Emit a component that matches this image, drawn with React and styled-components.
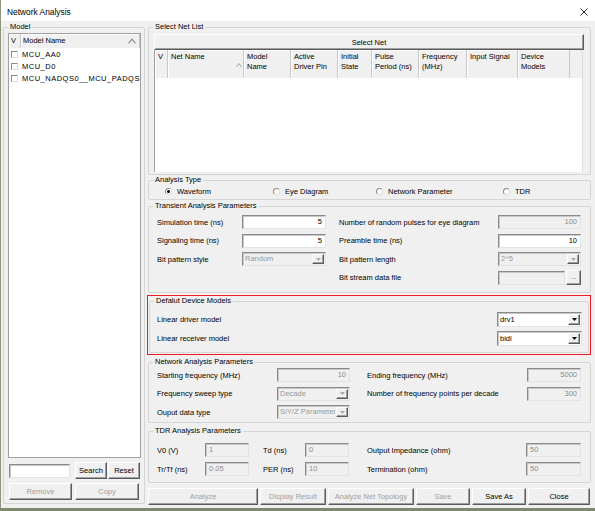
import React from 'react'
import styled, { createGlobalStyle } from 'styled-components';

const GlobalStyle = createGlobalStyle`
  html, body {
    margin: 0;
    padding: 0;
  }
  body {
    width: 595px;
    height: 511px;
    overflow: hidden;
    background: #7d8a6b;
    font-family: "Liberation Sans", Arial, sans-serif;
    color: #000;
  }
  * {
    box-sizing: border-box;
  }
`

const netColumns = [
  { w: 13, label: 'V' },
  { w: 76, label: 'Net Name', sort: true },
  { w: 47, label: 'Model\nName' },
  { w: 47, label: 'Active\nDriver Pin' },
  { w: 34, label: 'Initial\nState' },
  { w: 47, label: 'Pulse\nPeriod (ns)' },
  { w: 48, label: 'Frequency\n(MHz)' },
  { w: 51, label: 'Input Signal' },
  { w: 52, label: 'Device\nModels' },
];

const models = ['MCU_AA0', 'MCU_D0', 'MCU_NADQS0__MCU_PADQS0'];

const analysisTypes = [
  { label: 'Waveform', checked: true },
  { label: 'Eye Diagram' },
  { label: 'Network Parameter' },
  { label: 'TDR' },
];

const bottomButtons = [
  { label: 'Analyze', w: 110, disabled: true },
  { label: 'Display Result', w: 66, disabled: true },
  { label: 'Analyze Net Topology', w: 86, disabled: true },
  { label: 'Save', w: 54, disabled: true },
  { label: 'Save As', w: 54 },
  { label: 'Close', w: 62 },
];

const SortCaret = ({ size = 6 }) => (
  <svg width={size} height={size - 2} viewBox="0 0 6 4">
    <polyline points="0.4,3.8 3,0.6 5.6,3.8" fill="none" stroke="#8a8a8a" strokeWidth="0.8" />
  </svg>
);

const CloseIcon = () => (
  <svg width="8" height="8" viewBox="0 0 8 8">
    <path d="M0.5 0.5 L7.5 7.5 M7.5 0.5 L0.5 7.5" stroke="#111" strokeWidth="0.9" />
  </svg>
);

const ComboArrow = ({ disabled }) => (
  <svg width="5" height="3" viewBox="0 0 5 3">
    <polygon points="0,0 5,0 2.5,3" fill={disabled ? '#a8a8a8' : '#000'} />
  </svg>
);

const App = () => {
  return (
    <>
      <GlobalStyle />
      <Window>
        <TitleBar>
          <span>Network Analysis</span>
          <CloseIcon />
        </TitleBar>

        <Body>
          {/* 왼쪽 모델 목록 */}
          <GroupBox $h={481} $w={142}>
            <Legend>Model</Legend>
            <ModelContent>
              <ModelList>
                <ListHeader>
                  <HeaderCell $w={12}>V</HeaderCell>
                  <HeaderCell $grow>
                    <span>Model Name</span>
                    <SortCaret size={8} />
                  </HeaderCell>
                </ListHeader>
                {models.map(name => (
                  <ModelRow key={name}>
                    <CheckBox />
                    <span>{name}</span>
                  </ModelRow>
                ))}
              </ModelList>

              <SearchRow>
                <TextBox $w={61} />
                <PushButton $w={32} style={{ marginLeft: 5 }}>Search</PushButton>
                <PushButton $w={32} style={{ marginLeft: 1 }}>Reset</PushButton>
              </SearchRow>
              <SearchRow>
                <PushButton $w={63} disabled>Remove</PushButton>
                <PushButton $w={64} disabled style={{ marginLeft: 3 }}>Copy</PushButton>
              </SearchRow>
            </ModelContent>
          </GroupBox>

          <RightColumn>
            <GroupBox $h={152}>
              <Legend>Select Net List</Legend>
              <NetContent>
                <PushButton $h={16}>Select Net</PushButton>
                <NetTable>
                  <NetHeader>
                    {netColumns.map(col => (
                      <HeaderCell key={col.label} $w={col.w} $tall>
                        <span>{col.label}</span>
                        {col.sort && <SortCaret />}
                      </HeaderCell>
                    ))}
                    <HeaderFiller />
                  </NetHeader>
                  <NetBody />
                </NetTable>
              </NetContent>
            </GroupBox>

            <GroupBox $h={24} $mt={1}>
              <Legend>Analysis Type</Legend>
              <RadioRow>
                {analysisTypes.map(t => (
                  <RadioItem key={t.label}>
                    <Radio $checked={t.checked} />
                    <span>{t.label}</span>
                  </RadioItem>
                ))}
              </RadioRow>
            </GroupBox>

            <GroupBox $h={91} $mt={2}>
              <Legend>Transient Analysis Parameters</Legend>
              <ParamGrid $cols="85px 84px 13px 1fr 83px" $gap={4.5} $pad="5px 9px 0 8px">
                <Label>Simulation time (ns)</Label>
                <TextBox $align="right">5</TextBox>
                <span />
                <Label>Number of random pulses for eye diagram</Label>
                <TextBox $align="right" $disabled>100</TextBox>

                <Label>Signaling time (ns)</Label>
                <TextBox $align="right">5</TextBox>
                <span />
                <Label>Preamble time (ns)</Label>
                <TextBox $align="right">10</TextBox>

                <Label>Bit pattern style</Label>
                <Combo $disabled>
                  <span>Random</span>
                  <ComboButton><ComboArrow disabled /></ComboButton>
                </Combo>
                <span />
                <Label>Bit pattern length</Label>
                <Combo $disabled>
                  <span>2^5</span>
                  <ComboButton><ComboArrow disabled /></ComboButton>
                </Combo>

                <span />
                <span />
                <span />
                <Label>Bit stream data file</Label>
                <FileRow>
                  <TextBox $disabled $w={67} />
                  <DotsButton>...</DotsButton>
                </FileRow>
              </ParamGrid>
            </GroupBox>

            <Highlight>
              <GroupBox $h={56}>
                <Legend>Defalut Device Models</Legend>
                <ParamGrid $cols="1fr 85px" $gap={4} $pad="7px 6px 0 7px" $row={15}>
                  <Label>Linear driver model</Label>
                  <Combo>
                    <span>drv1</span>
                    <ComboButton><ComboArrow /></ComboButton>
                  </Combo>
                  <Label>Linear receiver model</Label>
                  <Combo>
                    <span>bidi</span>
                    <ComboButton><ComboArrow /></ComboButton>
                  </Combo>
                </ParamGrid>
              </GroupBox>
            </Highlight>

            <GroupBox $h={65} $mt={3}>
              <Legend>Network Analysis Parameters</Legend>
              <ParamGrid $cols="120px 73px 17px 1fr 54px" $gap={4.5} $pad="2px 9px 0 8px">
                <Label>Starting frequency (MHz)</Label>
                <TextBox $align="right" $disabled>10</TextBox>
                <span />
                <Label>Ending frequency (MHz)</Label>
                <TextBox $align="right" $disabled>5000</TextBox>

                <Label>Frequency sweep type</Label>
                <Combo $disabled>
                  <span>Decade</span>
                  <ComboButton><ComboArrow disabled /></ComboButton>
                </Combo>
                <span />
                <Label>Number of frequency points per decade</Label>
                <TextBox $align="right" $disabled>300</TextBox>

                <Label>Ouput data type</Label>
                <Combo $disabled>
                  <span>S/Y/Z Parameter</span>
                  <ComboButton><ComboArrow disabled /></ComboButton>
                </Combo>
              </ParamGrid>
            </GroupBox>

            <GroupBox $h={56} $mt={4}>
              <Legend>TDR Analysis Parameters</Legend>
              <ParamGrid $cols="48px 44px 14px 42px 44px 18px 1fr 55px" $gap={5} $pad="8px 9px 0 8px">
                <Label>V0 (V)</Label>
                <TextBox $disabled>1</TextBox>
                <span />
                <Label>Td (ns)</Label>
                <TextBox $disabled>0</TextBox>
                <span />
                <Label>Output Impedance (ohm)</Label>
                <TextBox $disabled>50</TextBox>

                <Label>Tr/Tf (ns)</Label>
                <TextBox $disabled>0.05</TextBox>
                <span />
                <Label>PER (ns)</Label>
                <TextBox $disabled>10</TextBox>
                <span />
                <Label>Termination (ohm)</Label>
                <TextBox $disabled>50</TextBox>
              </ParamGrid>
            </GroupBox>

            <ButtonBar>
              {bottomButtons.map(b => (
                <PushButton key={b.label} $w={b.w} $h={17} disabled={b.disabled}>
                  {b.label}
                </PushButton>
              ))}
            </ButtonBar>
          </RightColumn>
        </Body>
      </Window>
    </>
  );
}

const Window = styled.div`
  width: 595px;
  height: 508px;
  background: #f0f0f0;
  border-left: 1px solid #8d977f;
  display: flex;
  flex-direction: column;
`

const TitleBar = styled.div`
  height: 21px;
  flex: none;
  background: #fff;
  display: flex;
  align-items: center;
  justify-content: space-between;
  padding: 2px 7px 0 6px;
  font-size: 8.4px;
`

const Body = styled.div`
  flex: 1;
  display: flex;
  align-items: flex-start;
  gap: 3px;
  padding: 2px 4px 0 2px;
`

const RightColumn = styled.div`
  width: 443px;
  display: flex;
  flex-direction: column;
`

// 그룹박스 (fieldset + legend)
const GroupBox = styled.fieldset`
  margin: ${p => p.$mt || 0}px 0 0;
  padding: 0;
  min-width: 0;
  width: ${p => (p.$w ? `${p.$w}px` : 'auto')};
  height: ${p => p.$h}px;
  flex: none;
  border: 1px solid #d5d5d5;
  border-radius: 2px;
  display: flex;
  flex-direction: column;
`

const Legend = styled.legend`
  margin-left: 4px;
  padding: 0 2px;
  font-size: 7.5px;
  line-height: 8px;
  white-space: nowrap;
`

const Highlight = styled.div`
  margin: 2px 0 0 -1px;
  height: 60px;
  border: 1px solid #ec1c24;
  padding: 1px;
  display: flex;
  flex-direction: column;
`

const ModelContent = styled.div`
  padding: 2px 3px 3px 4px;
  display: flex;
  flex-direction: column;
  gap: 4px;
`

const ModelList = styled.div`
  height: 425px;
  background: #fff;
  border: 1px solid #a0a0a0;
  overflow: hidden;
`

const ListHeader = styled.div`
  height: 14px;
  display: flex;
  background: #f0f0f0;
`

const HeaderCell = styled.div`
  flex: ${p => (p.$grow ? 1 : 'none')};
  width: ${p => (p.$w ? `${p.$w}px` : 'auto')};
  display: flex;
  justify-content: space-between;
  align-items: ${p => (p.$tall ? 'flex-start' : 'center')};
  padding: ${p => (p.$tall ? '2px 1px 0 3px' : '0 3px 0 2px')};
  border-right: 1px solid #c8c8c8;
  box-shadow: inset 1px 1px 0 #fff;
  font-size: 7.5px;
  line-height: 10px;
  white-space: pre-line;

  svg {
    align-self: center;
    flex: none;
  }
`

const ModelRow = styled.div`
  height: 12px;
  display: flex;
  align-items: center;
  gap: 4px;
  padding-left: 2px;
  font-size: 7.5px;
  letter-spacing: 0.5px;
  white-space: nowrap;
`

const CheckBox = styled.span`
  width: 7px;
  height: 7px;
  flex: none;
  background: #fff;
  border: 1px solid;
  border-color: #8a8a8a #dcdcdc #dcdcdc #8a8a8a;
`

const SearchRow = styled.div`
  height: 17px;
  display: flex;
  align-items: center;
  padding-left: 1px;
`

const PushButton = styled.button`
  width: ${p => (p.$w ? `${p.$w}px` : '100%')};
  height: ${p => p.$h || 17}px;
  flex: none;
  margin: 0;
  padding: 0;
  background: #f0f0f0;
  border: 1px solid;
  border-color: #fff #5a5a5a #5a5a5a #fff;
  box-shadow: inset -1px -1px 0 #a0a0a0;
  font-family: "Liberation Sans", Arial, sans-serif;
  font-size: 7.5px;
  color: #000;
  white-space: nowrap;

  &:disabled {
    color: #a0a0a0;
  }
`

const NetContent = styled.div`
  padding: 3px 6px 2px 5px;
  display: flex;
  flex-direction: column;
`

const NetTable = styled.div`
  border-left: 1px solid #a0a0a0;
  border-right: 1px solid #dcdcdc;
  margin-right: 1px;
`

const NetHeader = styled.div`
  height: 28px;
  display: flex;
  background: #f0f0f0;
`

const HeaderFiller = styled.div`
  flex: 1;
`

const NetBody = styled.div`
  height: 94px;
  background: #fff;
`

const RadioRow = styled.div`
  height: 15px;
  display: grid;
  grid-template-columns: 108px 103px 127px 1fr;
  align-items: center;
  padding-left: 16px;
`

const RadioItem = styled.label`
  display: flex;
  align-items: center;
  gap: 5px;
  font-size: 7.5px;
`

const Radio = styled.span`
  width: 7px;
  height: 7px;
  border-radius: 50%;
  background: #fff;
  border: 1px solid;
  border-color: #8a8a8a #dcdcdc #dcdcdc #8a8a8a;
  display: flex;
  align-items: center;
  justify-content: center;

  &::after {
    content: '';
    width: 3px;
    height: 3px;
    border-radius: 50%;
    background: ${p => (p.$checked ? '#000' : 'transparent')};
  }
`

const ParamGrid = styled.div`
  display: grid;
  grid-template-columns: ${p => p.$cols};
  grid-auto-rows: ${p => p.$row || 14}px;
  row-gap: ${p => p.$gap}px;
  align-items: center;
  padding: ${p => p.$pad};
`

const Label = styled.span`
  font-size: 7.5px;
  white-space: nowrap;
`

const TextBox = styled.div`
  width: ${p => (p.$w ? `${p.$w}px` : 'auto')};
  height: 14px;
  background: ${p => (p.$disabled ? '#f0f0f0' : '#fff')};
  border: 1px solid;
  border-color: #8a8a8a #e3e3e3 #e3e3e3 #8a8a8a;
  box-shadow: inset 1px 1px 0 #c8c8c8;
  padding: 0 3px;
  font-size: 7.5px;
  line-height: 12px;
  text-align: ${p => p.$align || 'left'};
  color: ${p => (p.$disabled ? '#8c8c8c' : '#000')};
  overflow: hidden;
  white-space: nowrap;
`

const Combo = styled.div`
  height: ${p => (p.$disabled ? 14 : 15)}px;
  display: flex;
  align-items: stretch;
  background: ${p => (p.$disabled ? '#f0f0f0' : '#fff')};
  border: 1px solid;
  border-color: #8a8a8a #e3e3e3 #e3e3e3 #8a8a8a;
  box-shadow: inset 1px 1px 0 #c8c8c8;
  font-size: 7.5px;
  color: ${p => (p.$disabled ? '#9a9a9a' : '#000')};

  span {
    flex: 1;
    padding-left: 2px;
    line-height: ${p => (p.$disabled ? 12 : 13)}px;
    white-space: nowrap;
    overflow: hidden;
  }
`

const ComboButton = styled.div`
  width: 12px;
  flex: none;
  margin: 1px;
  display: flex;
  align-items: center;
  justify-content: center;
  background: #f0f0f0;
  border: 1px solid;
  border-color: #fff #5a5a5a #5a5a5a #fff;
  box-shadow: inset -1px -1px 0 #a0a0a0;
`

const FileRow = styled.div`
  display: flex;
  align-items: center;
  justify-content: space-between;
`

const DotsButton = styled.div`
  width: 15px;
  height: 15px;
  background: #f0f0f0;
  border: 1px solid;
  border-color: #fff #5a5a5a #5a5a5a #fff;
  box-shadow: inset -1px -1px 0 #a0a0a0;
  font-size: 8px;
  line-height: 12px;
  letter-spacing: -0.5px;
  text-align: center;
  color: #8a8a8a;
`

const ButtonBar = styled.div`
  margin-top: 5px;
  display: flex;
  gap: 2px;
`

export default App
